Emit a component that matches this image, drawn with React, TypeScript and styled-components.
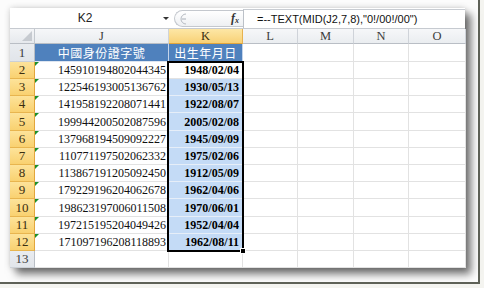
import React from 'react';
import styled, { createGlobalStyle } from 'styled-components';

const GlobalStyle = createGlobalStyle`
	html, body {
		margin: 0;
		padding: 0;
		background: #f4f4f0;
	}
`

const Frame = styled.div`
	box-sizing: border-box;
	width: 480px;
	height: 284px;
	padding: 8px 0 0 10px;
	background: #fcfcfc;
	border-right: 2px solid #5f6258;
	border-bottom: 2px solid #5f6258;
`

const Card = styled.div`
	width: 455px;
	height: 260px;
	background: #fff;
	box-shadow: 0 0 6px rgba(0, 0, 0, 0.18), 6px 6px 8px rgba(0, 0, 0, 0.55);
	font-family: 'Liberation Serif', serif;
`

const FormulaBar = styled.div`
	box-sizing: border-box;
	display: flex;
	height: 21px;
	border-bottom: 1px solid #c6cad0;
`

const NameBox = styled.div`
	width: 150px;
	display: flex;
	align-items: center;
	justify-content: center;
	font-family: 'Liberation Sans', sans-serif;
	font-size: 12px;
	color: #222;
`

const DropArrow = styled.div`
	width: 12px;
	display: flex;
	align-items: center;
	justify-content: center;
	&::after {
		content: '';
		border-left: 3px solid transparent;
		border-right: 3px solid transparent;
		border-top: 3px solid #333;
	}
`

const Pill = styled.div`
	box-sizing: border-box;
	width: 69px;
	height: 17px;
	margin: 2px 0 0 2px;
	display: flex;
	align-items: center;
	justify-content: space-between;
	padding: 0 4px 0 3px;
	border: 1px solid #c4c8ce;
	border-right: none;
	border-radius: 9px 0 0 9px;
	background: linear-gradient(#ffffff, #eef0f3);
`

const Fx = styled.span`
	font-family: 'Liberation Serif', serif;
	font-style: italic;
	font-weight: bold;
	font-size: 12px;
	color: #333;
	& sub {
		font-size: 8px;
		vertical-align: -1px;
	}
`

const FormulaInput = styled.div`
	box-sizing: border-box;
	flex: 1;
	margin-top: 1px;
	padding-left: 13px;
	display: flex;
	align-items: center;
	border-left: 1px solid #bcc1c8;
	border-top: 1px solid #c8ccd2;
	font-family: 'Liberation Sans', sans-serif;
	font-size: 11px;
	color: #111;
`

const Sheet = styled.div`
	display: grid;
	grid-template-columns: 25px 134px 74px 55px 56px 55px 57px;
	grid-template-rows: 15px 18px 17px 17px 17px 18px 17px 17px 17px 17px 18px 17px 17px 17px;
`

const Corner = styled.div`
	box-sizing: border-box;
	position: relative;
	background: linear-gradient(#f4f5f7, #e6e9ed);
	border-right: 1px solid #c3c8ce;
	border-bottom: 1px solid #b9bec5;
	&::after {
		content: '';
		position: absolute;
		right: 2px;
		bottom: 2px;
		border-left: 10px solid transparent;
		border-bottom: 10px solid #c6cad0;
	}
`

const ColHeader = styled.div<{ $selected?: boolean }>`
	box-sizing: border-box;
	display: flex;
	align-items: center;
	justify-content: center;
	font-size: 12.5px;
	color: ${p => (p.$selected ? '#3a2e10' : '#3c3c3c')};
	background: ${p => (p.$selected ? 'linear-gradient(#fde7a6, #f8d176)' : 'linear-gradient(#f6f7f9, #eaedf0)')};
	border-right: 1px solid ${p => (p.$selected ? '#e7b24f' : '#cfd3d9')};
	border-bottom: 1px solid ${p => (p.$selected ? '#e2a63c' : '#b9bec5')};
`

const RowHeader = styled.div<{ $selected?: boolean }>`
	box-sizing: border-box;
	display: flex;
	align-items: center;
	justify-content: center;
	font-size: 13px;
	color: ${p => (p.$selected ? '#3a2e10' : '#3c3c3c')};
	background: ${p => (p.$selected ? 'linear-gradient(#fde39a, #f9d170)' : 'linear-gradient(#e9ecf0, #e1e5ea)')};
	border-right: 1px solid ${p => (p.$selected ? '#e2a63c' : '#b9bec5')};
	border-bottom: 1px solid ${p => (p.$selected ? '#e8b54f' : '#cbd0d6')};
`

const TitleCell = styled.div`
	box-sizing: border-box;
	display: flex;
	align-items: center;
	justify-content: center;
	background: #4f81bd;
	color: #fff;
	font-family: 'Noto Sans CJK TC', sans-serif;
	font-size: 12px;
	letter-spacing: 0.5px;
	border-right: 1px solid #c4d4ea;
	border-bottom: 1px solid #dde5f0;
`

const IdCell = styled.div`
	box-sizing: border-box;
	position: relative;
	display: flex;
	align-items: center;
	justify-content: flex-end;
	padding: 1px 2px 0 0;
	font-size: 12px;
	color: #111;
	border-right: 1px solid #dcdcdc;
	border-bottom: 1px solid #e2e2e2;
	&::before {
		content: '';
		position: absolute;
		top: 0;
		left: 0;
		border-top: 4px solid #1c8f2c;
		border-right: 4px solid transparent;
	}
`

const DateCell = styled.div<{ $active?: boolean }>`
	box-sizing: border-box;
	position: relative;
	display: flex;
	align-items: center;
	justify-content: flex-end;
	padding: 1px 3px 0 0;
	font-size: 12px;
	font-weight: bold;
	color: #000;
	background: ${p => (p.$active ? '#fff' : '#c4dbf6')};
	border-right: 1px solid #dcdcdc;
	border-bottom: 1px solid ${p => (p.$active ? '#e2e2e2' : '#e6eef8')};
`

const EmptyCell = styled.div`
	box-sizing: border-box;
	border-right: 1px solid #e2e2e2;
	border-bottom: 1px solid #e2e2e2;
`

/* thick outline of K2:K12, hung off the active cell */
const Selection = styled.div<{ $rows: number }>`
	position: absolute;
	z-index: 1;
	top: -1px;
	left: -2px;
	width: 77px;
	height: ${p => p.$rows + 2}px;
	box-sizing: border-box;
	border: 2px solid #000;
	pointer-events: none;
	&::after {
		content: '';
		position: absolute;
		right: -4px;
		bottom: -4px;
		width: 4px;
		height: 4px;
		background: #000;
		border: 1px solid #fff;
	}
`

const rows = [
	['145910194802044345', '1948/02/04'],
	['122546193005136762', '1930/05/13'],
	['141958192208071441', '1922/08/07'],
	['199944200502087596', '2005/02/08'],
	['137968194509092227', '1945/09/09'],
	['110771197502062332', '1975/02/06'],
	['113867191205092450', '1912/05/09'],
	['179229196204062678', '1962/04/06'],
	['198623197006011508', '1970/06/01'],
	['197215195204049426', '1952/04/04'],
	['171097196208118893', '1962/08/11'],
];

const columns = ['J', 'K', 'L', 'M', 'N', 'O'];

function Blanks() {
	return (
		<>
			<EmptyCell />
			<EmptyCell />
			<EmptyCell />
			<EmptyCell />
		</>
	);
}

function App() {
	return (
		<>
			<GlobalStyle />
			<Frame>
				<Card>
					<FormulaBar>
						<NameBox>K2</NameBox>
						<DropArrow />
						<Pill>
							<svg width="10" height="12" viewBox="0 0 10 12">
								<path d="M8 1 A5 5 0 0 0 8 11" fill="none" stroke="#b5bac1" />
								<line x1="4" y1="6" x2="8" y2="6" stroke="#a9aeb6" />
							</svg>
							<Fx>f<sub>x</sub></Fx>
						</Pill>
						<FormulaInput>=--TEXT(MID(J2,7,8),"0!/00!/00")</FormulaInput>
					</FormulaBar>
					<Sheet>
						<Corner />
						{columns.map(c => (
							<ColHeader key={c} $selected={c === 'K'}>{c}</ColHeader>
						))}
						<RowHeader>1</RowHeader>
						<TitleCell>中國身份證字號</TitleCell>
						<TitleCell>出生年月日</TitleCell>
						<Blanks />
						{rows.map(([id, date], i) => (
							<React.Fragment key={id}>
								<RowHeader $selected>{i + 2}</RowHeader>
								<IdCell>{id}</IdCell>
								<DateCell $active={i === 0}>
									{date}
									{i === 0 && <Selection $rows={189} />}
								</DateCell>
								<Blanks />
							</React.Fragment>
						))}
						<RowHeader>13</RowHeader>
						<EmptyCell />
						<EmptyCell />
						<Blanks />
					</Sheet>
				</Card>
			</Frame>
		</>
	);
}

export default App;
